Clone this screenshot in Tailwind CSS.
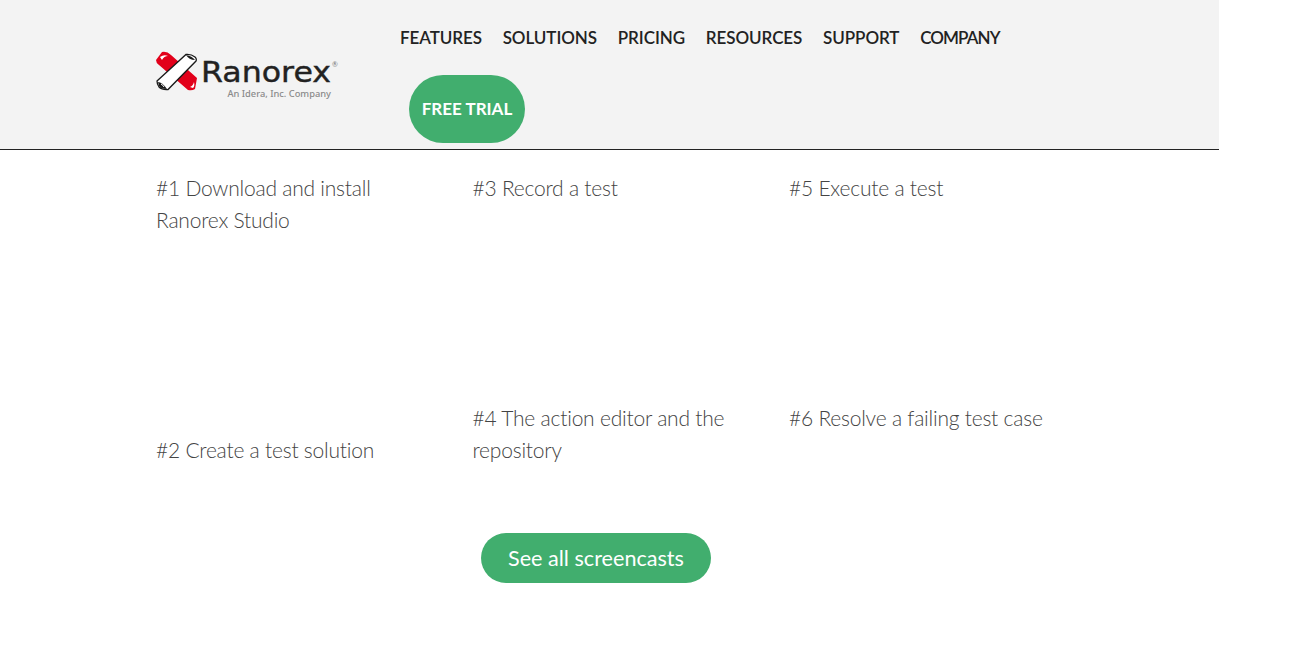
<!DOCTYPE html>
<html><head><meta charset="utf-8"><script src="https://cdn.jsdelivr.net/npm/@tailwindcss/browser@4"></script></head>
<body class="bg-white font-['Lato','Noto_Sans',sans-serif]">
<div class="w-[1219px]">
<header class="h-[150px] bg-[#f3f3f3] border-b border-[#222] pl-[156px] flex">
  <div class="w-[244px] pt-[51px] flex gap-[4px] items-start shrink-0">
    <svg class="w-[41px] h-[41px] shrink-0" viewBox="0 0 41 41">
      <path d="M0 9 L6 1 Q11 0 15 4 L41 27 L39 38 Q36 40 32 39 L3 14 Q0 12 0 9 Z" fill="#e2001a"/>
      <path d="M4 6 Q8 3 12 5 Q8 5 6 9 Z" fill="#fff"/>
      <path d="M34 36 Q37 35 38 31 Q39 35 37 37 Z" fill="#fff"/>
      <path d="M1 30 L30 3.5 Q35 3 39 6 Q41 8 40 10 L12 38.5 Q6 39 3 36 Q1 33 1 30 Z" fill="#fff" stroke="#1a1a1a" stroke-width="1.3"/>
      <path d="M30 4 Q33 9 39 9 Q36 5 30 4 Z" fill="#1a1a1a"/>
      <path d="M2 31 Q6 31 11 38 Q5 38 3 35 Z" fill="#1a1a1a"/>
      <path d="M5 33 Q7 34 8 36" fill="none" stroke="#fff" stroke-width="1"/>
    </svg>
    <div class="relative pt-[7px]">
      <div class="text-[28px] leading-[30px] text-[#222] font-['DejaVu_Sans'] scale-x-[1.13] origin-left [-webkit-text-stroke:0.4px_#222]">Ranorex</div>
      <div class="absolute left-[131px] top-[9px] text-[7px] leading-[8px] text-[#777]">®</div>
      <div class="text-[9.3px] leading-[11px] font-medium text-[#8a8a8a] font-['Noto_Sans'] text-right w-[130px]">An Idera, Inc. Company</div>
    </div>
  </div>
  <nav class="flex-1">
    <ul class="flex gap-[20.7px] h-[75px] pt-[26px] text-[17px] tracking-[-0.06px] leading-[24px] font-semibold text-[#222]">
      <li>FEATURES</li><li>SOLUTIONS</li><li>PRICING</li><li>RESOURCES</li><li>SUPPORT</li><li class="tracking-[-0.9px]">COMPANY</li>
    </ul>
    <a class="ml-[9px] w-[116px] h-[68px] rounded-[34px] bg-[#41ae6e] text-white text-[17px] font-bold flex items-center justify-center">FREE TRIAL</a>
  </nav>
</header>
<main class="pl-[156px] pt-[22px]">
  <div class="grid grid-cols-[316.5px_316.5px_316.5px] text-[21px] tracking-[-0.22px] leading-[32px] font-light text-[#444]">
    <div class="pr-[50px]"><p>#1 Download and install Ranorex Studio</p><p class="mt-[198px]">#2 Create a test solution</p></div>
    <div class="pr-[50px]"><p>#3 Record a test</p><p class="mt-[198px]">#4 The action editor and the repository</p></div>
    <div class="pr-[50px]"><p>#5 Execute a test</p><p class="mt-[198px]">#6 Resolve a failing test case</p></div>
  </div>
  <div class="w-[880px] flex justify-center mt-[67px]">
    <a class="w-[230px] h-[50px] rounded-[25px] bg-[#41ae6e] text-white text-[21.6px] flex items-center justify-center">See all screencasts</a>
  </div>
</main>
</div>
</body></html>
